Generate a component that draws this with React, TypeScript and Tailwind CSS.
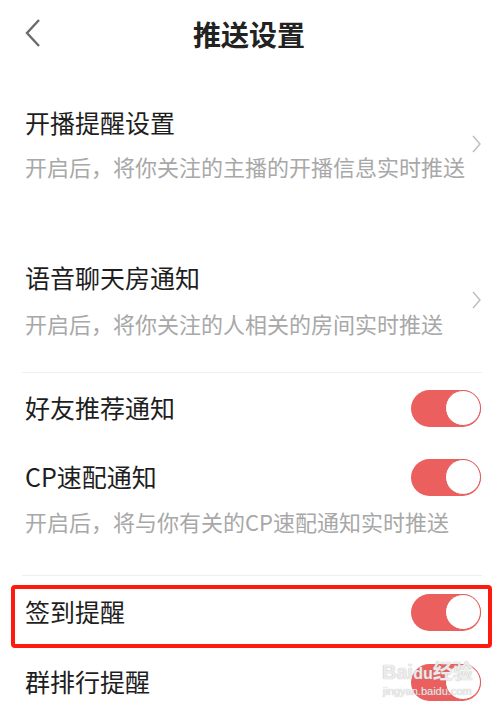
import React from "react";

const Toggle = () => (
  <div className="w-[70px] h-[37px] rounded-full bg-[#ec5f5f] flex items-center justify-end">
    <div className="w-[36px] h-[36px] rounded-full bg-white border-[1.5px] border-[#e35a5a]" />
  </div>
);

const Chevron = () => (
  <svg width="10" height="18" viewBox="0 0 10 18" className="shrink-0">
    <polyline points="1,1 8,9 1,17" fill="none" stroke="#bdbdbd" strokeWidth="1.4" />
  </svg>
);

const App = () => {
  const font = { fontFamily: '"Noto Sans CJK SC", "Noto Sans", sans-serif' };

  return (
    <div className="w-[498px] h-[712px] bg-white overflow-hidden relative" style={font}>
      {/* Header */}
      <div className="h-[68px] relative flex items-center justify-center">
        <svg width="18" height="28" viewBox="0 0 18 28" className="absolute left-[24px] top-[19px]">
          <polyline points="15,1 3,14 15,27" fill="none" stroke="#6b6b6b" strokeWidth="2.4" />
        </svg>
        <h1 className="text-[28px] font-bold text-[#222] leading-none">推送设置</h1>
      </div>

      {/* Row 1 */}
      <div className="pt-[38px] pl-[25px] pr-[16px] flex items-center justify-between">
        <div>
          <p className="text-[25px] leading-[32px] text-[#1e1e1e]">开播提醒设置</p>
          <p className="mt-[13px] text-[22px] leading-[30px] text-[#a8a8a8]">开启后，将你关注的主播的开播信息实时推送</p>
        </div>
        <Chevron />
      </div>

      {/* Row 2 */}
      <div className="pt-[80px] pl-[25px] pr-[16px] flex items-center justify-between">
        <div>
          <p className="text-[25px] leading-[32px] text-[#1e1e1e]">语音聊天房通知</p>
          <p className="mt-[15px] text-[22px] leading-[30px] text-[#a8a8a8]">开启后，将你关注的人相关的房间实时推送</p>
        </div>
        <Chevron />
      </div>

      <div className="mt-[34px] ml-[22px] mr-[16px] h-px bg-[#eeeeee]" />

      {/* Toggles */}
      <div className="h-[70px] pl-[25px] pr-[17px] flex items-center justify-between">
        <p className="text-[25px] text-[#1e1e1e]">好友推荐通知</p>
        <Toggle />
      </div>

      <div className="pt-[15px] pl-[25px] pr-[17px]">
        <div className="h-[38px] flex items-center justify-between">
          <p className="text-[25px] text-[#1e1e1e]">CP速配通知</p>
          <Toggle />
        </div>
        <p className="mt-[10px] text-[22px] leading-[30px] text-[#a8a8a8]">开启后，将与你有关的CP速配通知实时推送</p>
      </div>

      <div className="mt-[39px] ml-[22px] mr-[16px] h-px bg-[#eeeeee]" />

      {/* Highlighted row */}
      <div className="mt-[9px] ml-[11px] mr-[6px] h-[63px] border-4 border-[#ff1a0f] rounded-[4px] pt-[4px] pl-[10px] pr-[7px]">
        <div className="h-[38px] flex items-center justify-between">
          <p className="text-[25px] text-[#1e1e1e]">签到提醒</p>
          <Toggle />
        </div>
      </div>

      <div className="pt-[15px] pl-[25px] pr-[17px]">
        <div className="h-[38px] flex items-center justify-between">
          <p className="text-[25px] text-[#1e1e1e]">群排行提醒</p>
          <Toggle />
        </div>
      </div>

      {/* Watermark */}
      <div className="absolute left-[382px] top-[662px] flex flex-col items-center leading-none text-white/80 [text-shadow:0_0_1px_#999]">
        <span className="text-[20px] font-bold" style={{ fontFamily: '"Liberation Sans", "Noto Sans CJK SC", sans-serif' }}>Bai<span className="text-[16px]">du</span>经验</span>
        <span className="text-[11px] mt-[4px]" style={{ fontFamily: '"Liberation Sans", sans-serif' }}>jingyan.baidu.com</span>
      </div>
    </div>
  );
};

export default App;
